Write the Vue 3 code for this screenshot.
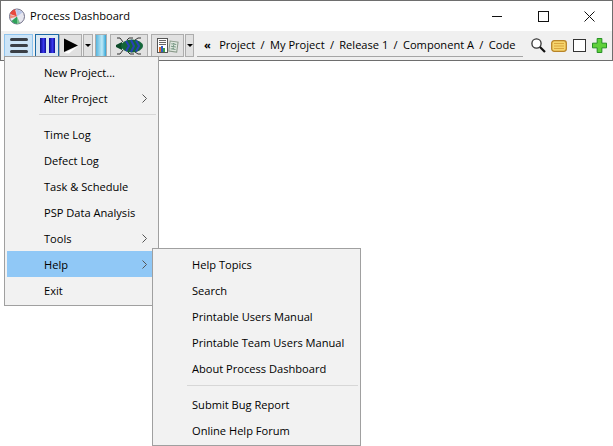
<script setup>
const mainItems = [
  { label: 'New Project...' },
  { label: 'Alter Project', arrow: true },
  { sep: true },
  { label: 'Time Log' },
  { label: 'Defect Log' },
  { label: 'Task & Schedule' },
  { label: 'PSP Data Analysis' },
  { label: 'Tools', arrow: true },
  { label: 'Help', arrow: true, active: true },
  { label: 'Exit' },
]

const helpItems = [
  { label: 'Help Topics' },
  { label: 'Search' },
  { label: 'Printable Users Manual' },
  { label: 'Printable Team Users Manual' },
  { label: 'About Process Dashboard' },
  { sep: true },
  { label: 'Submit Bug Report' },
  { label: 'Online Help Forum' },
]

const crumbs = ['Project', 'My Project', 'Release 1', 'Component A', 'Code']
</script>

<template>
  <div class="page">
    <div class="window">
      <header class="titlebar">
        <svg class="app-icon" width="16" height="17" viewBox="0 0 16 17">
          <circle cx="8" cy="8.5" r="7.5" fill="#e6e6ef" stroke="#6f6f86" />
          <path d="M8 8.5 L1 6 A7.5 7.5 0 0 1 6 1.3 Z" fill="#e8483c" />
          <path d="M8 8.5 L1 7 L1 10.5 Z" fill="#f08a78" />
          <path d="M8 8.5 L2.5 13 A7.5 7.5 0 0 0 8 16 Z" fill="#2fa15a" />
          <path d="M8 8.5 L8 16 L11 15 Z" fill="#7cc48f" />
          <path d="M8 8.5 L7 1 L14 4 Z" fill="#b9c6e8" />
        </svg>
        <span class="title">Process Dashboard</span>
        <div class="win-controls">
          <span class="win-btn"><i class="min"></i></span>
          <span class="win-btn"><i class="max"></i></span>
          <span class="win-btn">
            <svg width="11" height="11" viewBox="0 0 11 11"><path d="M0.5 0.5 L10.5 10.5 M10.5 0.5 L0.5 10.5" stroke="#111" fill="none" /></svg>
          </span>
        </div>
      </header>

      <div class="toolbar">
        <button class="tool menu-btn" type="button">
          <i></i><i></i><i></i>
        </button>
        <button class="tool pause-btn" type="button">
          <i></i><i></i>
        </button>
        <button class="tool play-btn" type="button">
          <svg width="16" height="16" viewBox="0 0 16 16"><path d="M1 0.5 L15 7.5 L1 14 Z" fill="#000" /><path d="M1 15 L15 8 L6 15.5 Z" fill="#fff" /></svg>
        </button>
        <button class="tool drop" type="button"><b></b></button>
        <button class="tool bar-btn" type="button"><i></i></button>
        <button class="tool bug-btn" type="button">
          <svg width="28" height="18" viewBox="0 0 28 18">
            <g stroke="#333" stroke-width="1" fill="none">
              <path d="M8 5 L5 1 L2 1" />
              <path d="M12 3 L14 1 L18 1" />
              <path d="M20 3 L23 1 L26 1" />
              <path d="M8 13 L5 17 L2 17" />
              <path d="M13 15 L15 17 L19 17" />
              <path d="M20 15 L23 17 L26 17" />
            </g>
            <path d="M1 8 L7 5 L7 13 L1 10 Z" fill="#0c4a2a" />
            <ellipse cx="17" cy="9" rx="11" ry="6.5" fill="#14663a" />
            <path d="M11 4 L14 9 L11 14 M16 3 L19 9 L16 15 M21 3.5 L24 9 L21 14.5" stroke="#2740b8" stroke-width="2" fill="none" />
          </svg>
        </button>
        <button class="tool report-btn" type="button">
          <svg width="22" height="15" viewBox="0 0 22 15">
            <rect x="0.5" y="0.5" width="10" height="14" fill="#fff" stroke="#555" />
            <path d="M2 2.5 H9 M2 4.5 H9 M2 6.5 H9" stroke="#666" />
            <rect x="2" y="9" width="2" height="5" fill="#e0702c" />
            <rect x="4" y="8" width="2" height="6" fill="#2c5fc8" />
            <rect x="6" y="10" width="2" height="4" fill="#3aa04a" />
            <rect x="12.5" y="3.5" width="8" height="10" fill="#dfe7df" stroke="#8a9a8a" transform="rotate(8 16 8)" />
            <path d="M14 6 H19 M14 8.5 H19 M14 11 H19 M16.5 5 V12" stroke="#7a9a86" transform="rotate(8 16 8)" />
          </svg>
        </button>
        <button class="tool drop last" type="button"><b></b></button>

        <nav class="crumbs">
          <span class="chev">«</span>
          <template v-for="(crumb, i) in crumbs" :key="crumb">
            <span class="slash" v-if="i > 0">/</span>
            <span>{{ crumb }}</span>
          </template>
        </nav>

        <div class="tail-icons">
          <svg width="15" height="15" viewBox="0 0 15 15">
            <circle cx="5.5" cy="5.5" r="4.6" fill="#fff" stroke="#333" stroke-width="1.3" />
            <path d="M9 9 L14 14" stroke="#111" stroke-width="2.2" />
          </svg>
          <svg width="16" height="12" viewBox="0 0 16 12">
            <rect x="0.7" y="0.7" width="14.6" height="10.6" rx="2.5" fill="#f6d56c" stroke="#b88428" stroke-width="1.3" />
            <path d="M3 3.5 H13 M3 6 H13 M3 8.5 H13" stroke="#d9a53e" />
          </svg>
          <span class="check"></span>
          <svg width="15" height="15" viewBox="0 0 16 16">
            <path d="M5.5 0.5 H10.5 V5.5 H15.5 V10.5 H10.5 V15.5 H5.5 V10.5 H0.5 V5.5 H5.5 Z" fill="#5fd03a" stroke="#1b8a1b" />
          </svg>
        </div>
      </div>
    </div>

    <ul class="menu main-menu">
      <template v-for="(item, i) in mainItems" :key="i">
        <li v-if="item.sep" class="sep"></li>
        <li v-else class="item" :class="{ active: item.active }">
          <span>{{ item.label }}</span>
          <svg v-if="item.arrow" class="arrow" width="5" height="9" viewBox="0 0 5 9"><path d="M0.5 0.5 L4.5 4.5 L0.5 8.5" stroke="#555" fill="none" /></svg>
        </li>
      </template>
    </ul>

    <ul class="menu help-menu">
      <template v-for="(item, i) in helpItems" :key="i">
        <li v-if="item.sep" class="sep"></li>
        <li v-else class="item"><span>{{ item.label }}</span></li>
      </template>
    </ul>
  </div>
</template>

<style scoped>
.page {
  position: relative;
  width: 613px;
  height: 446px;
  overflow: hidden;
  background: #fff;
  font-family: "Open Sans", "Noto Sans", sans-serif;
  font-size: 11.1px;
  color: #000;
  white-space: nowrap;
}

.window {
  height: 61px;
  box-sizing: border-box;
  border: 1px solid #6e6e6e;
  display: flex;
  flex-direction: column;
}

.titlebar {
  height: 30px;
  display: flex;
  align-items: center;
  padding-left: 8px;
  flex: none;
}

.app-icon {
  margin-right: 5px;
}

.title {
  margin-top: -2px;
}

.win-controls {
  margin-left: auto;
  display: flex;
}

.win-btn {
  width: 46px;
  height: 30px;
  display: flex;
  align-items: center;
  justify-content: center;
}

.min {
  width: 10px;
  height: 1px;
  background: #111;
}

.max {
  width: 9px;
  height: 9px;
  border: 1px solid #111;
}

.toolbar {
  flex: 1;
  background: #f0f0f0;
  display: flex;
  align-items: flex-start;
  padding: 3px 0 0 3px;
}

.tool {
  height: 23px;
  box-sizing: border-box;
  padding: 0;
  border: 1px solid #adadad;
  background: #e1e1e1;
  display: flex;
  align-items: center;
  justify-content: center;
  flex: none;
}

.menu-btn {
  width: 29px;
  flex-direction: column;
  gap: 3px;
  background: #cce4f7;
  border-color: #8fc4ee;
  margin-right: 2px;
}

.menu-btn i {
  width: 18px;
  height: 3px;
  border-radius: 2px;
  background: #3a3f46;
}

.pause-btn {
  width: 24px;
  gap: 3px;
  border-color: #1b6aa5;
  background: #dce9f3;
}

.pause-btn i {
  width: 6px;
  height: 15px;
  background: linear-gradient(90deg, #0a0a8a, #3a3af0 60%, #0a0a8a);
}

.play-btn {
  width: 23px;
  margin-right: 1px;
}

.drop {
  width: 10px;
  margin-right: 2px;
}

.drop.last {
  width: 9px;
  margin-right: 3px;
}

.drop b {
  border-left: 3px solid transparent;
  border-right: 3px solid transparent;
  border-top: 3px solid #000;
}

.bar-btn {
  width: 12px;
  margin-right: 3px;
}

.bar-btn i {
  width: 10px;
  height: 21px;
  background: linear-gradient(90deg, #57b5de, #bfe9f7 60%, #2fa3d6);
}

.bug-btn {
  width: 38px;
  margin-right: 3px;
}

.report-btn {
  width: 33px;
  margin-right: 1px;
}

.crumbs {
  width: 326px;
  height: 23px;
  box-sizing: border-box;
  border-bottom: 1px solid #a5a5a5;
  display: flex;
  align-items: center;
  gap: 5.3px;
  padding: 0 0 1px 7px;
  flex: none;
}

.chev {
  font-weight: 700;
  margin-right: 3px;
}

.tail-icons {
  display: flex;
  align-items: center;
  height: 23px;
  margin-left: 8px;
  gap: 5px;
}

.check {
  width: 11px;
  height: 11px;
  border: 1px solid #333;
  background: #fff;
  margin: 0 1px;
}

.menu {
  position: absolute;
  margin: 0;
  list-style: none;
  box-sizing: border-box;
  border: 1px solid #a0a0a0;
  background: #f2f2f2;
  padding: 2px;
}

.main-menu {
  left: 4px;
  top: 56px;
  width: 155px;
  height: 250px;
}

.help-menu {
  left: 152px;
  top: 248px;
  width: 209px;
  height: 198px;
}

.item {
  height: 26px;
  display: flex;
  align-items: center;
  justify-content: space-between;
  padding: 0 9px 0 37px;
}

.item.active {
  background: #90c8f6;
}

.sep {
  height: 1px;
  margin: 3px 0 6px 32px;
  background: #d7d7d7;
}

.help-menu .sep {
  margin: 4px 0 5px 32px;
}

.arrow {
  flex: none;
}
</style>
